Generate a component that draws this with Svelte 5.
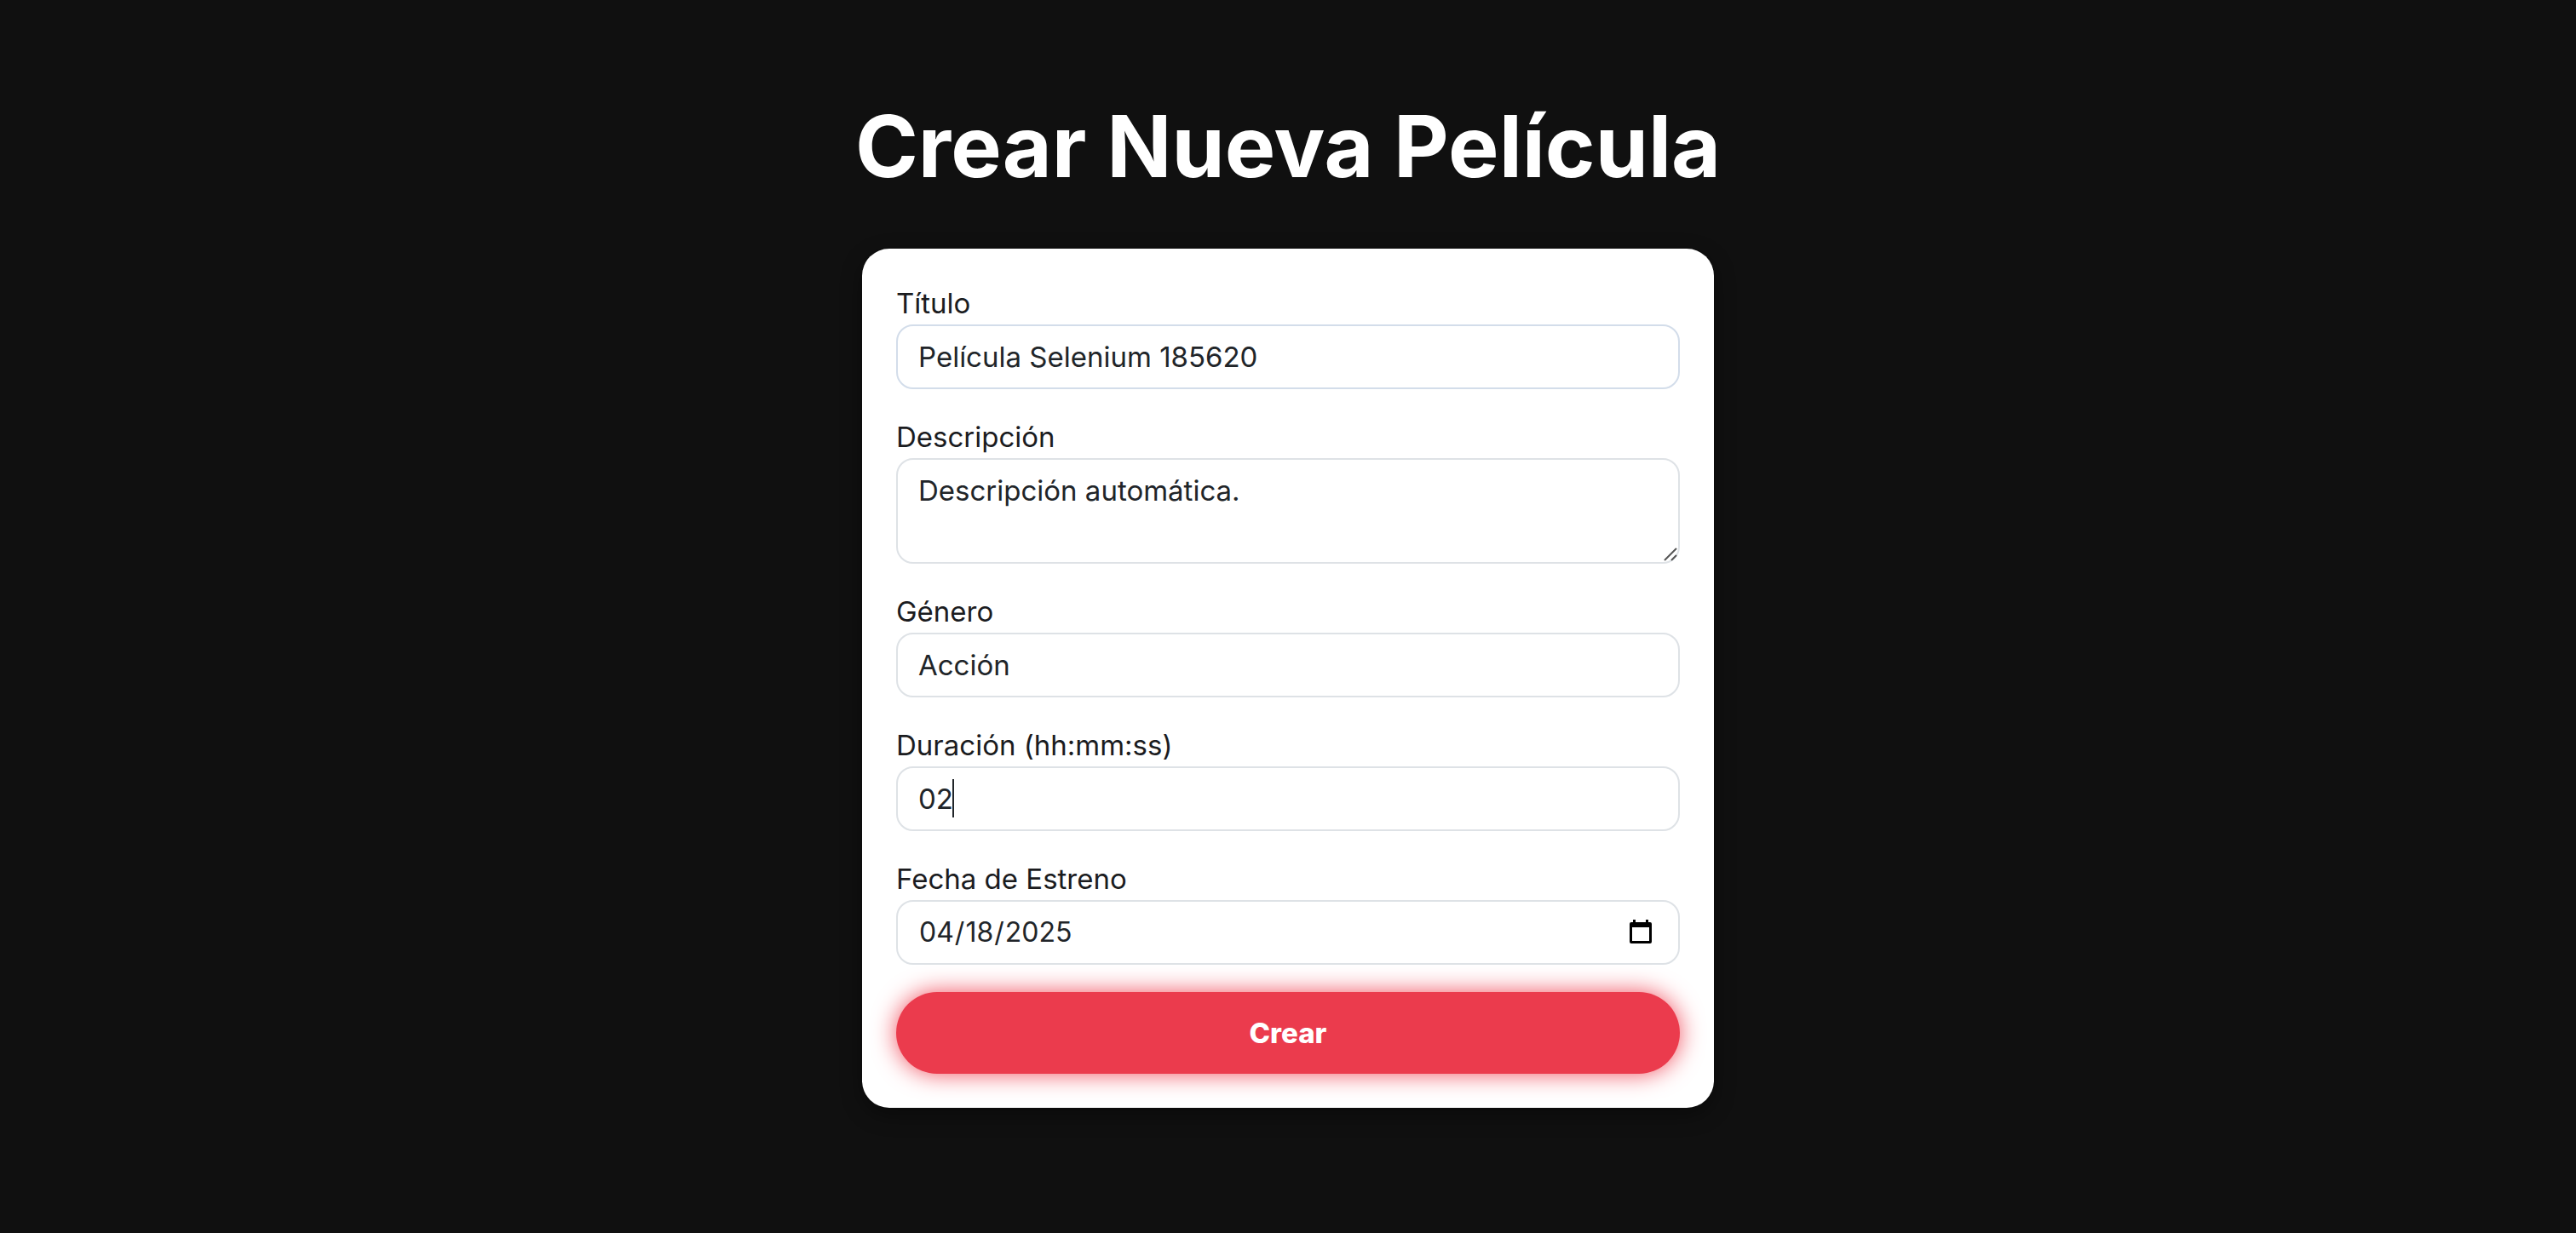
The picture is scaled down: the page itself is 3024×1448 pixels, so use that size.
<script>
  let title = $state('Película Selenium 185620');
  let description = $state('Descripción automática.');
  let genre = $state('Acción');
  let duration = $state('02');
  let release = $state('2025-04-18');
</script>

<main>
  <h1>Crear Nueva Película</h1>
  <form onsubmit={(e) => e.preventDefault()}>
    <div class="field">
      <label for="title">Título</label>
      <input id="title" class="touched" type="text" bind:value={title} />
    </div>
    <div class="field">
      <label for="description">Descripción</label>
      <div class="control">
        <textarea id="description" rows="2" bind:value={description}></textarea>
        <svg class="grip" viewBox="0 0 18 18" aria-hidden="true">
          <path d="M2 16 16 2M10 16l6-6" />
        </svg>
      </div>
    </div>
    <div class="field">
      <label for="genre">Género</label>
      <input id="genre" type="text" bind:value={genre} />
    </div>
    <div class="field">
      <label for="duration">Duración (hh:mm:ss)</label>
      <div class="control">
        <input id="duration" type="text" bind:value={duration} />
        <span class="caret" aria-hidden="true"></span>
      </div>
    </div>
    <div class="field">
      <label for="release">Fecha de Estreno</label>
      <div class="control">
        <input id="release" type="date" bind:value={release} />
        <svg class="calendar" viewBox="0 0 26 28" aria-hidden="true">
          <path fill-rule="evenodd" d="M4 0h3v3h12V0h3v3h2a2 2 0 0 1 2 2v21a2 2 0 0 1-2 2H2a2 2 0 0 1-2-2V5a2 2 0 0 1 2-2h2zM3 9v16h20V9z" />
        </svg>
      </div>
    </div>
    <button type="submit">Crear</button>
  </form>
</main>

<style>
  :global(body) {
    background: #101010;
  }

  main {
    display: flex;
    flex-direction: column;
    align-items: center;
    min-height: 100vh;
    box-sizing: border-box;
    padding: 98px 32px;
    font-family: Inter, 'Open Sans', sans-serif;
    font-size: 33px;
    line-height: 48px;
  }

  h1 {
    margin: 0 0 46px;
    color: #fff;
    font-size: 100px;
    font-weight: 700;
    line-height: 148px;
    text-align: center;
  }

  form {
    width: 100%;
    max-width: 1000px;
    box-sizing: border-box;
    padding: 40px;
    border-radius: 32px;
    background: #fff;
    box-shadow: 0 8px 24px rgba(0, 0, 0, 0.4);
  }

  .field {
    margin-bottom: 32px;
  }

  label {
    display: block;
    line-height: 49px;
    color: #1b1c1f;
  }

  .control {
    position: relative;
  }

  input,
  textarea {
    display: block;
    width: 100%;
    box-sizing: border-box;
    margin: 0;
    padding: 12px 24px;
    border: 2px solid #dee2e6;
    border-radius: 20px;
    outline: none;
    background: #fff;
    color: #212529;
    font: inherit;
  }

  input {
    height: 76px;
  }

  input[type='date'] {
    font-size: 32px;
  }

  .touched {
    border-color: #d3ddea;
  }

  textarea {
    height: 124px;
    resize: vertical;
  }

  textarea::-webkit-resizer {
    background: transparent;
  }

  .grip {
    position: absolute;
    right: 2px;
    bottom: 2px;
    width: 18px;
    height: 18px;
    fill: none;
    stroke: #555;
    stroke-width: 2;
    pointer-events: none;
  }

  .caret {
    position: absolute;
    top: 15px;
    left: 66px;
    width: 2px;
    height: 45px;
    background: #212529;
  }

  input::-webkit-calendar-picker-indicator {
    opacity: 0;
  }

  .calendar {
    position: absolute;
    top: 23px;
    right: 33px;
    width: 26px;
    height: 28px;
    fill: #000;
    pointer-events: none;
  }

  button {
    display: block;
    width: 100%;
    height: 96px;
    padding: 0;
    border: 0;
    border-radius: 48px;
    background: #eb3b4d;
    box-shadow: 0 0 28px #f0505f;
    color: #fff;
    font: inherit;
    font-weight: 800;
    cursor: pointer;
  }
</style>
